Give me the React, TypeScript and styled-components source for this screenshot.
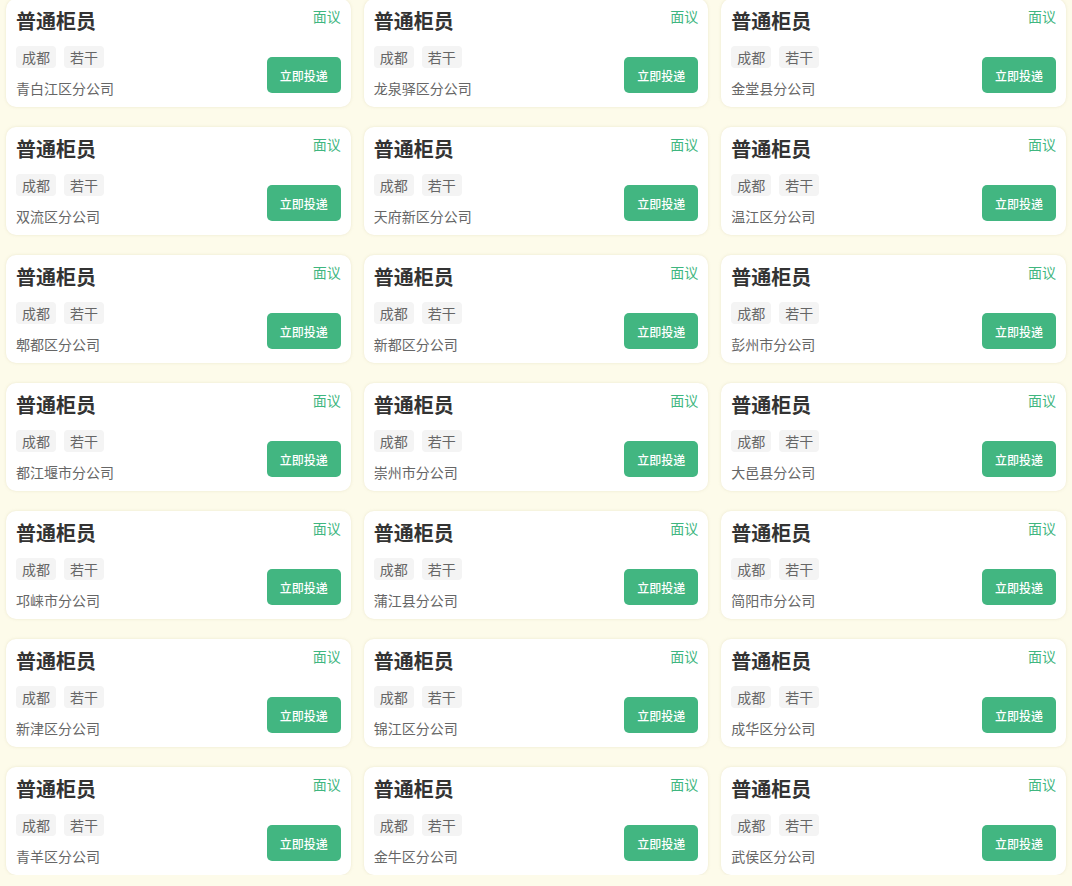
import React from 'react';
import styled, { createGlobalStyle } from 'styled-components';

const GlobalStyle = createGlobalStyle`
  html, body {
    margin: 0;
    padding: 0;
    background: #fdfbea;
    font-family: "Noto Sans CJK SC", "Noto Sans", sans-serif;
  }
`;

const Grid = styled.div`
  display: grid;
  grid-template-columns: repeat(3, 1fr);
  column-gap: 13px;
  row-gap: 20px;
  padding: 0 6px;
  margin-top: -1px;
`;

const Card = styled.div`
  box-sizing: border-box;
  height: 108px;
  background: #fff;
  border-radius: 10px;
  box-shadow: 0 0 3px rgba(180, 170, 120, 0.25);
  padding: 8px 10px 10px;
  display: flex;
  justify-content: space-between;
`;

const Left = styled.div`
  display: flex;
  flex-direction: column;
`;

const Title = styled.div`
  font-size: 20px;
  font-weight: 700;
  color: #333;
  line-height: 28px;
`;

const Tags = styled.div`
  display: flex;
  gap: 8px;
  margin-top: 11px;
`;

const Tag = styled.span`
  background: #f4f4f4;
  color: #666;
  font-size: 14px;
  line-height: 22px;
  padding: 0 6px;
  border-radius: 4px;
`;

const Place = styled.div`
  margin-top: 10px;
  font-size: 14px;
  line-height: 20px;
  color: #666;
`;

const Right = styled.div`
  display: flex;
  flex-direction: column;
  align-items: flex-end;
  justify-content: space-between;
`;

const Salary = styled.div`
  font-size: 14px;
  line-height: 20px;
  margin-top: -1px;
  color: #3fb67f;
`;

const ApplyButton = styled.button`
  width: 74px;
  height: 36px;
  border: none;
  border-radius: 5px;
  background: #42b681;
  color: #fff;
  font-family: inherit;
  font-size: 12px;
  font-weight: 500;
  padding: 0;
  margin-bottom: 4px;
  cursor: pointer;
`;

const places = [
  '青白江区分公司', '龙泉驿区分公司', '金堂县分公司',
  '双流区分公司', '天府新区分公司', '温江区分公司',
  '郫都区分公司', '新都区分公司', '彭州市分公司',
  '都江堰市分公司', '崇州市分公司', '大邑县分公司',
  '邛崃市分公司', '蒲江县分公司', '简阳市分公司',
  '新津区分公司', '锦江区分公司', '成华区分公司',
  '青羊区分公司', '金牛区分公司', '武侯区分公司',
];

export default function App() {
  return (
    <>
      <GlobalStyle />
      <Grid>
        {places.map((place) => (
          <Card key={place}>
            <Left>
              <Title>普通柜员</Title>
              <Tags>
                <Tag>成都</Tag>
                <Tag>若干</Tag>
              </Tags>
              <Place>{place}</Place>
            </Left>
            <Right>
              <Salary>面议</Salary>
              <ApplyButton>立即投递</ApplyButton>
            </Right>
          </Card>
        ))}
      </Grid>
    </>
  );
}
